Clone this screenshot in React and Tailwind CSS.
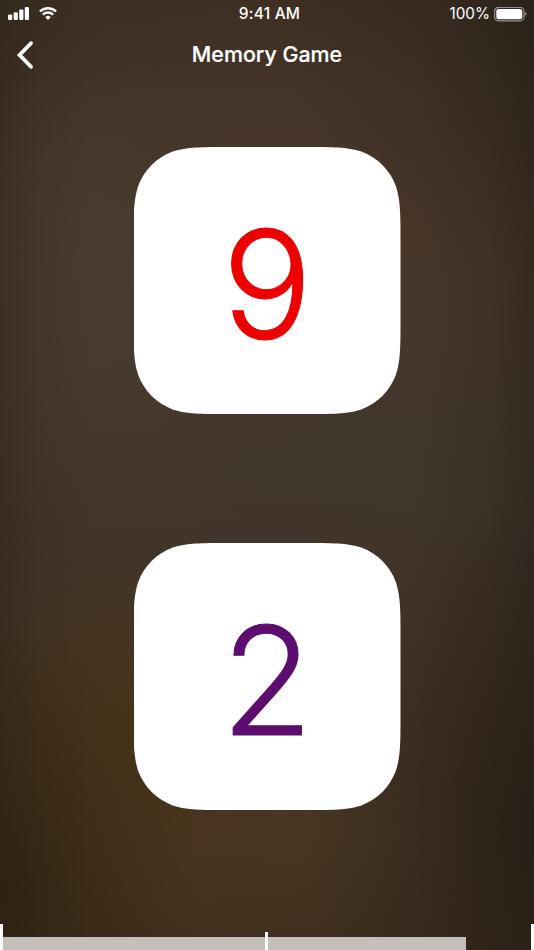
const BACKDROP = [
  'linear-gradient(90deg, rgba(38,28,19,0.34) 0%, rgba(38,28,19,0.12) 8%, rgba(38,28,19,0) 17%, rgba(34,27,20,0) 78%, rgba(34,27,20,0.18) 91%, rgba(34,27,20,0.45) 100%)',
  'radial-gradient(ellipse 240px 160px at 0px 0px, rgba(58,47,35,0.9), rgba(58,47,35,0))',
  'radial-gradient(ellipse 260px 280px at 534px 0px, rgba(48,39,29,0.85), rgba(48,39,29,0))',
  'radial-gradient(ellipse 230px 330px at 534px 830px, rgba(42,33,24,0.95), rgba(42,33,24,0))',
  'radial-gradient(ellipse 200px 270px at 0px 890px, rgba(51,36,18,0.95), rgba(51,36,18,0))',
  'radial-gradient(ellipse 250px 220px at 140px 750px, rgba(73,52,27,1), rgba(73,52,27,0))',
  'radial-gradient(ellipse 190px 230px at 80px 270px, rgba(72,60,49,0.9), rgba(72,60,49,0))',
  'radial-gradient(ellipse 260px 120px at 420px 470px, rgba(63,54,43,0.8), rgba(63,54,43,0))',
  'linear-gradient(180deg, #3d2f22 0%, #453528 10%, #483628 22%, #45372a 38%, #43372b 48%, #41342a 58%, #453424 76%, #483624 88%, #3f2e1d 100%)',
].join(', ');

function StatusBar() {
  return (
    <header className="grid h-7 grid-cols-3 items-center">
      <div className="flex items-center gap-[9px] pl-2">
        <svg width="22" height="14" viewBox="0 0 22 14" fill="white">
          <rect x="0" y="7.4" width="4.2" height="5.6" rx="1.2" />
          <rect x="5.6" y="5.2" width="4.2" height="7.8" rx="1.2" />
          <rect x="11.2" y="2.4" width="4.2" height="10.6" rx="1.2" />
          <rect x="16.8" y="0" width="4.2" height="13" rx="1.2" />
        </svg>
        <svg width="18" height="14" viewBox="0 0 18 14" fill="none" stroke="white" strokeWidth="2.4">
          <path d="M0.9 4.5a11.6 11.6 0 0 1 16.2 0" />
          <path d="M3.9 7.6a7.4 7.4 0 0 1 10.2 0" />
          <path d="M9 13 6.3 10.2a3.8 3.8 0 0 1 5.4 0Z" fill="white" stroke="none" />
        </svg>
      </div>
      <span className="pl-[5px] text-center text-[15.5px] font-medium leading-7 tracking-[0.2px]">9:41 AM</span>
      <div className="flex items-center justify-end gap-1 pr-[7px]">
        <span className="text-[15.3px] leading-7">100%</span>
        <svg width="33" height="15" viewBox="0 0 33 15">
          <rect x="0.6" y="0.4" width="29.4" height="13.4" rx="3.8" fill="none" stroke="white" strokeOpacity="0.5" strokeWidth="1.2" />
          <rect x="2.3" y="2" width="26" height="10.2" rx="2.2" fill="white" />
          <path d="M31.2 5c1.8.7 1.8 3.5 0 4.2Z" fill="white" fillOpacity="0.5" />
        </svg>
      </div>
    </header>
  );
}

function NavBar() {
  return (
    <nav className="grid h-[53px] grid-cols-[1fr_auto_1fr] items-center">
      <button aria-label="Back" className="pl-4">
        <svg width="18" height="30" viewBox="0 0 18 30" fill="none" stroke="white" strokeWidth="3.8" strokeLinecap="round" strokeLinejoin="miter">
          <path d="M15 3.2 3.6 15 15 26.8" />
        </svg>
      </button>
      <h1 className="pb-[2px] text-[21.4px] font-medium leading-7 [-webkit-text-stroke:0.2px_white]">Memory Game</h1>
      <span />
    </nav>
  );
}

function Card({ children, className }) {
  return (
    <button
      className={`flex size-[267px] items-center justify-center bg-white text-[150px] font-[350] leading-none [-webkit-text-stroke:1px_currentColor] [clip-path:path('M94.8_0H172.2C199.5_0_213.2_0_227.8_4.6C243.9_10.5_256.5_23.1_262.4_39.2C267_53.8_267_67.5_267_94.8V172.2C267_199.5_267_213.2_262.4_227.8C256.5_243.9_243.9_256.5_227.8_262.4C213.2_267_199.5_267_172.2_267H94.8C67.5_267_53.8_267_39.2_262.4C23.1_256.5_10.5_243.9_4.6_227.8C0_213.2_0_199.5_0_172.2V94.8C0_67.5_0_53.8_4.6_39.2C10.5_23.1_23.1_10.5_39.2_4.6C53.8_0_67.5_0_94.8_0Z')] ${className}`}
    >
      {children}
    </button>
  );
}

function ProgressBar() {
  return (
    <footer className="flex h-[26px] items-end">
      <i className="h-full w-[3px] bg-white" />
      <i className="h-[13px] w-[262px] bg-[#c4bfba]" />
      <i className="h-[18px] w-[3px] bg-white" />
      <i className="h-[13px] w-[197.5px] bg-[#c4bfba]" />
      <i className="ml-auto h-full w-[3px] bg-white" />
    </footer>
  );
}

export default function App() {
  return (
    <div className="flex h-[950px] w-[534px] flex-col overflow-hidden font-['Inter',sans-serif] text-white" style={{ background: BACKDROP }}>
      <StatusBar />
      <NavBar />
      <main className="flex flex-1 flex-col items-center gap-[129px] pt-[66px]">
        <Card className="text-[#ec0000]">
          <span className="block pt-2">9</span>
        </Card>
        <Card className="text-[#5c0d6e]">
          <span className="block pt-2">2</span>
        </Card>
      </main>
      <ProgressBar />
    </div>
  );
}
